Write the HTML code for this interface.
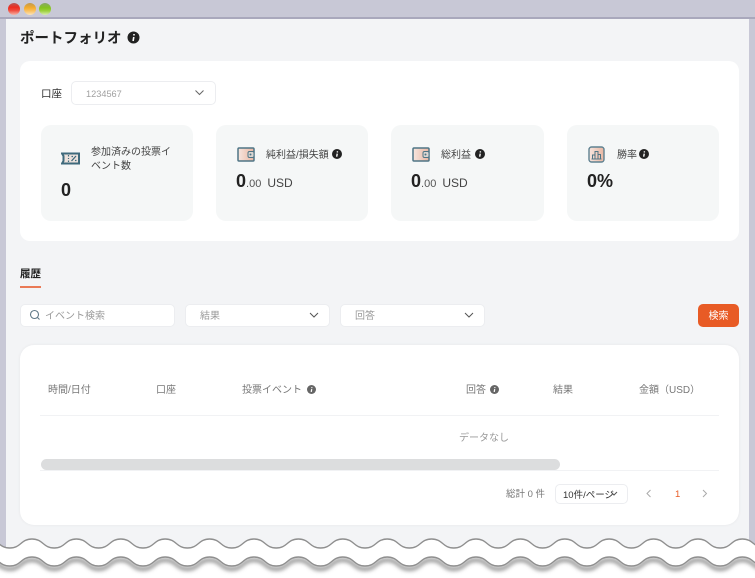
<!DOCTYPE html>
<html lang="ja"><head><meta charset="utf-8">
<style>
html,body{margin:0;padding:0}
body{width:755px;height:578px;overflow:hidden;background:#fff;position:relative;font-family:"Liberation Sans","Noto Sans CJK JP",sans-serif;color:#333}
.a{position:absolute;white-space:nowrap}
.t{line-height:14px;height:14px}
.box{position:absolute;background:#fff;border:1px solid #ecedf0;box-sizing:border-box;border-radius:5px}
.card{position:absolute;top:125px;height:96px;background:#f5f7f7;border-radius:10px}
.lab{font-size:10px;color:#444}
.big{font-size:18px;font-weight:700;color:#222;line-height:20px}
.sm{font-size:12px;font-weight:400;color:#444}
.ph{font-size:10px;color:#9a9a9a}
.th{font-size:10px;color:#777}
svg{position:absolute}
</style></head><body>
<div class="a" style="left:0;top:0;width:755px;height:17px;background:#c8c8d6"></div>
<div class="a" style="left:0;top:17px;width:755px;height:2px;background:#a9a8bc"></div>
<div class="a" style="left:0;top:19px;width:6px;height:530px;background:#c8c8d6"></div>
<div class="a" style="left:749px;top:19px;width:6px;height:530px;background:#c8c8d6"></div>
<div class="a" style="left:6px;top:19px;width:743px;height:530px;background:#f3f4f6"></div>
<div class="a" style="left:8px;top:3px;width:12px;height:12px;border-radius:50%;background:linear-gradient(#b85a58 0,#ec2b20 35%,#f0483a 60%,#f6b4a8 100%)"></div>
<div class="a" style="left:24px;top:3px;width:12px;height:12px;border-radius:50%;background:linear-gradient(#c09a50 0,#f5ac2b 40%,#f8c060 65%,#fbe3bb 100%)"></div>
<div class="a" style="left:39px;top:3px;width:12px;height:12px;border-radius:50%;background:linear-gradient(#8aa868 0,#85c41d 40%,#9bd03c 65%,#d8ecb0 100%)"></div>

<div class="a" style="left:20px;top:29px;font-size:14.5px;font-weight:700;line-height:20px;color:#222">ポートフォリオ</div>
<svg style="left:127px;top:31px" width="13" height="13" viewBox="0 0 13 13"><circle cx="6.5" cy="6.5" r="6" fill="#222"/><path d="M7 3v1.5M6.800 6l-.7 4" stroke="#fff" stroke-width="1.6" fill="none"/></svg>

<div class="a" style="left:20px;top:61px;width:719px;height:180px;background:#fff;border-radius:10px"></div>
<div class="a t" style="left:41px;top:87px;font-size:10.5px;color:#333">口座</div>
<div class="box" style="left:71px;top:81px;width:145px;height:24px"></div>
<div class="a t" style="left:86px;top:87px;font-size:9.2px;color:#a0a0a0">1234567</div>
<svg style="left:195px;top:90px" width="9" height="6"><path d="M.5 .5l4 4 4-4" stroke="#666" fill="none"/></svg>

<div class="card" style="left:41px;width:152px"></div>
<div class="card" style="left:216px;width:152px"></div>
<div class="card" style="left:391px;width:153px"></div>
<div class="card" style="left:567px;width:152px"></div>

<svg style="left:61px;top:152px" width="19" height="13" viewBox="0 0 19 13"><path d="M1 1.500h17v10H1l1.500-2.500v-5z" fill="#ece2dd" stroke="#3f6a7c" stroke-width="2"/><path d="M7.500 3v1.500M7.500 6v1M7.500 8.500v1.500" stroke="#3f6a7c" stroke-width="1.200"/><path d="M10.500 9l4.500-5M10.500 4.500h1.500M14 8.500h1.500" stroke="#3f6a7c" stroke-width="1.300"/></svg>
<div class="a lab" style="left:91px;top:146px;line-height:14px;white-space:normal;width:82px">参加済みの投票イベント数</div>
<div class="a big" style="left:61px;top:180px">0</div>

<svg style="left:237px;top:147px" width="18" height="15" viewBox="0 0 18 15"><defs><linearGradient id="h" x1="0" x2="1"><stop offset="0" stop-color="#f6e6df"/><stop offset="1" stop-color="#e9b6a2"/></linearGradient></defs><rect x="1" y="1" width="16" height="13" rx="1" fill="url(#h)" stroke="#4e7585" stroke-width="1.500"/><rect x="11" y="4.500" width="6" height="6" rx="1.500" fill="#dcd6d2" stroke="#4e7585"/><circle cx="13.500" cy="7.500" r="1" fill="#4e7585"/></svg>
<div class="a t lab" style="left:266px;top:149px">純利益/損失額</div>
<svg style="left:332px;top:149px" width="10" height="10" viewBox="0 0 13 13"><circle cx="6.500" cy="6.500" r="6.500" fill="#222"/><path d="M7 3v1.500M6.800 6l-.7 4" stroke="#fff" stroke-width="1.800" fill="none"/></svg>
<div class="a big" style="left:236px;top:171px">0<span style="font-size:11px;font-weight:400;color:#555">.00</span><span class="sm" style="margin-left:6px">USD</span></div>

<svg style="left:412px;top:147px" width="18" height="15" viewBox="0 0 18 15"><rect x="1" y="1" width="16" height="13" rx="1" fill="url(#h)" stroke="#4e7585" stroke-width="1.500"/><rect x="11" y="4.500" width="6" height="6" rx="1.500" fill="#dcd6d2" stroke="#4e7585"/><circle cx="13.500" cy="7.500" r="1" fill="#4e7585"/></svg>
<div class="a t lab" style="left:441px;top:149px">総利益</div>
<svg style="left:475px;top:149px" width="10" height="10" viewBox="0 0 13 13"><circle cx="6.500" cy="6.500" r="6.500" fill="#222"/><path d="M7 3v1.500M6.800 6l-.7 4" stroke="#fff" stroke-width="1.800" fill="none"/></svg>
<div class="a big" style="left:411px;top:171px">0<span style="font-size:11px;font-weight:400;color:#555">.00</span><span class="sm" style="margin-left:6px">USD</span></div>

<svg style="left:588px;top:146px" width="17" height="17" viewBox="0 0 17 17"><rect x="1" y="1" width="15" height="15" rx="2.500" fill="url(#h)" stroke="#5f8291" stroke-width="1.400"/><path d="M4.500 13V9H7v4M7 13V5.500h3V13M10 13V8.500h2.500V13M3.500 13h10" fill="none" stroke="#4e7585" stroke-width="1"/></svg>
<div class="a t lab" style="left:617px;top:149px">勝率</div>
<svg style="left:639px;top:149px" width="10" height="10" viewBox="0 0 13 13"><circle cx="6.500" cy="6.500" r="6.500" fill="#222"/><path d="M7 3v1.500M6.800 6l-.7 4" stroke="#fff" stroke-width="1.800" fill="none"/></svg>
<div class="a big" style="left:587px;top:171px">0%</div>

<div class="a t" style="left:20px;top:267px;font-size:10.500px;font-weight:700;color:#222">履歴</div>
<div class="a" style="left:20px;top:286px;width:21px;height:2px;background:#ea7a56"></div>

<div class="box" style="left:20px;top:304px;width:155px;height:23px"></div>
<svg style="left:29px;top:309px" width="12" height="12"><circle cx="5.500" cy="5.500" r="4" fill="none" stroke="#5f7886" stroke-width="1.100"/><path d="M8.500 8.500l2 2" stroke="#5f7886" stroke-width="1.100"/></svg>
<div class="a t ph" style="left:45px;top:310px">イベント検索</div>
<div class="box" style="left:185px;top:304px;width:145px;height:23px"></div>
<div class="a t ph" style="left:200px;top:310px">結果</div>
<svg style="left:309px;top:312px" width="10" height="7"><path d="M1 1l4 4 4-4" stroke="#555" fill="none"/></svg>
<div class="box" style="left:340px;top:304px;width:145px;height:23px"></div>
<div class="a t ph" style="left:355px;top:310px">回答</div>
<svg style="left:464px;top:312px" width="10" height="7"><path d="M1 1l4 4 4-4" stroke="#555" fill="none"/></svg>
<div class="a" style="left:698px;top:304px;width:41px;height:23px;background:#e85b25;border-radius:5px;color:#fff;font-size:10px;line-height:25px;text-align:center">検索</div>

<div class="a" style="left:20px;top:345px;width:719px;height:180px;background:#fff;border-radius:14px;box-shadow:0 0 3px rgba(0,0,0,.06)"></div>
<div class="a t th" style="left:48px;top:384px">時間/日付</div>
<div class="a t th" style="left:156px;top:384px">口座</div>
<div class="a t th" style="left:242px;top:384px">投票イベント</div>
<svg style="left:307px;top:385px" width="9" height="9" viewBox="0 0 13 13"><circle cx="6.500" cy="6.500" r="6.500" fill="#666"/><path d="M7 3v1.500M6.800 6l-.7 4" stroke="#fff" stroke-width="1.800" fill="none"/></svg>
<div class="a t th" style="left:466px;top:384px">回答</div>
<svg style="left:490px;top:385px" width="9" height="9" viewBox="0 0 13 13"><circle cx="6.500" cy="6.500" r="6.500" fill="#666"/><path d="M7 3v1.500M6.800 6l-.7 4" stroke="#fff" stroke-width="1.800" fill="none"/></svg>
<div class="a t th" style="left:553px;top:384px">結果</div>
<div class="a t th" style="left:639px;top:384px">金額（USD）</div>
<div class="a" style="left:40px;top:415px;width:679px;height:1px;background:#f1f2f4"></div>
<div class="a t" style="left:459px;top:432px;font-size:10px;color:#999">データなし</div>
<div class="a" style="left:41px;top:459px;width:519px;height:11px;background:#dcddde;border-radius:6px"></div>
<div class="a" style="left:40px;top:470px;width:679px;height:1px;background:#f1f2f4"></div>
<div class="a t" style="left:506px;top:488px;font-size:9.500px;color:#777">総計 0 件</div>
<div class="box" style="left:555px;top:484px;width:73px;height:20px"></div>
<div class="a t" style="left:563px;top:489px;font-size:9.500px;color:#333;width:51px;overflow:hidden">10件/ページ</div>
<svg style="left:610px;top:491px" width="8" height="6"><path d="M1 1l3 3 3-3" stroke="#555" fill="none"/></svg>
<svg style="left:646px;top:489px" width="6" height="9"><path d="M4.500 1L1 4.500 4.500 8" stroke="#aaa" fill="none"/></svg>
<div class="a t" style="left:675px;top:488px;font-size:9.500px;color:#e85b25">1</div>
<svg style="left:702px;top:489px" width="6" height="9"><path d="M1 1l3.500 3.500L1 8" stroke="#aaa" fill="none"/></svg>

<svg style="left:0;top:530px;overflow:hidden" width="755" height="48" viewBox="0 530 755 48">
<defs>
<filter id="s" x="-5%" y="-100%" width="110%" height="400%"><feGaussianBlur stdDeviation="2"/></filter>
<linearGradient id="bg" gradientUnits="userSpaceOnUse" x1="0" y1="0" x2="755" y2="0">
<stop offset="0" stop-color="#c8c8d6"/><stop offset="0.00795" stop-color="#c8c8d6"/><stop offset="0.00795" stop-color="#f3f4f6"/><stop offset="0.99205" stop-color="#f3f4f6"/><stop offset="0.99205" stop-color="#c8c8d6"/><stop offset="1" stop-color="#c8c8d6"/>
</linearGradient>
<path id="w" d="M-12.400 0c11 0 11 9 22.200 9s11 -9 22.200 -9s11 9 22.200 9s11 -9 22.200 -9s11 9 22.200 9s11 -9 22.200 -9s11 9 22.200 9s11 -9 22.200 -9s11 9 22.200 9s11 -9 22.200 -9s11 9 22.200 9s11 -9 22.200 -9s11 9 22.200 9s11 -9 22.200 -9s11 9 22.200 9s11 -9 22.200 -9s11 9 22.200 9s11 -9 22.200 -9s11 9 22.200 9s11 -9 22.200 -9s11 9 22.200 9s11 -9 22.200 -9s11 9 22.200 9s11 -9 22.200 -9s11 9 22.200 9s11 -9 22.200 -9s11 9 22.200 9s11 -9 22.200 -9s11 9 22.200 9s11 -9 22.200 -9s11 9 22.200 9s11 -9 22.200 -9s11 9 22.200 9s11 -9 22.200 -9s11 9 22.200 9s11 -9 22.200 -9s11 9 22.200 9s11 -9 22.200 -9"/>
<path id="u" d="M-12.400 0c11 0 11 9 22.200 9s11 -9 22.200 -9s11 9 22.200 9s11 -9 22.200 -9s11 9 22.200 9s11 -9 22.200 -9s11 9 22.200 9s11 -9 22.200 -9s11 9 22.200 9s11 -9 22.200 -9s11 9 22.200 9s11 -9 22.200 -9s11 9 22.200 9s11 -9 22.200 -9s11 9 22.200 9s11 -9 22.200 -9s11 9 22.200 9s11 -9 22.200 -9s11 9 22.200 9s11 -9 22.200 -9s11 9 22.200 9s11 -9 22.200 -9s11 9 22.200 9s11 -9 22.200 -9s11 9 22.200 9s11 -9 22.200 -9s11 9 22.200 9s11 -9 22.200 -9s11 9 22.200 9s11 -9 22.200 -9s11 9 22.200 9s11 -9 22.200 -9s11 9 22.200 9s11 -9 22.200 -9s11 9 22.200 9s11 -9 22.200 -9V-40H-12.400Z"/>
</defs>
<rect x="0" y="530" width="755" height="48" fill="#fff"/>
<use href="#w" y="560" fill="none" stroke="#777" stroke-width="3" filter="url(#s)"/>
<use href="#u" y="557" fill="#fff"/>
<use href="#u" y="539" fill="url(#bg)"/>
<use href="#w" y="539" fill="none" stroke="#8f8f8f" stroke-width="1.400"/>
<use href="#w" y="557" fill="none" stroke="#8f8f8f" stroke-width="1.400"/>
</svg>
</body></html>
